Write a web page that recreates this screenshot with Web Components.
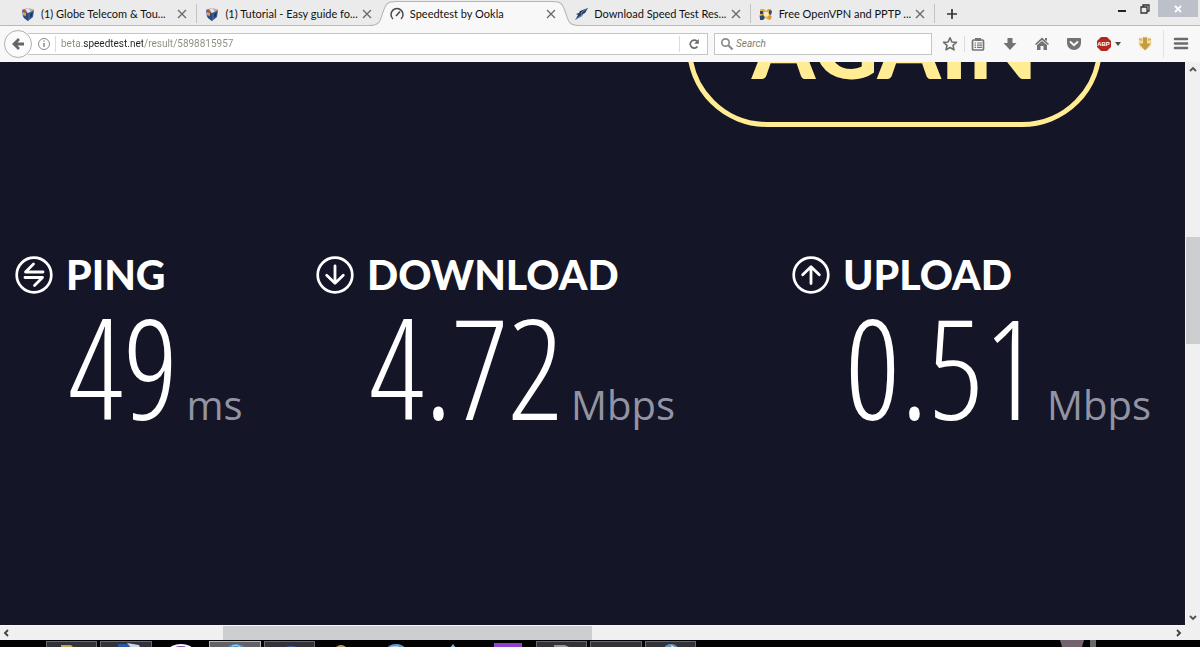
<!DOCTYPE html>
<html lang="en">
<head>
<meta charset="utf-8">
<meta name="viewport" content="width=device-width, initial-scale=1">
<title>Speedtest by Ookla</title>
<style>
  html, body { height: 100%; margin: 0; }
  body { overflow: hidden; background: #000; font-family: Roboto, "Noto Sans", sans-serif; }
</style>
</head>
<body>
<browser-window>
  <tab-strip slot="tabs">
    <browser-tab icon="cube">(1) Globe Telecom &amp; Tou...</browser-tab>
    <browser-tab icon="cube">(1) Tutorial - Easy guide fo...</browser-tab>
    <browser-tab icon="gauge" active>Speedtest by Ookla</browser-tab>
    <browser-tab icon="bolt">Download Speed Test Res...</browser-tab>
    <browser-tab icon="knot">Free OpenVPN and PPTP ...</browser-tab>
  </tab-strip>
  <nav-bar slot="nav" url="beta.speedtest.net/result/5898815957"></nav-bar>
  <speed-page>
    <speed-result label="PING" value="49" unit="ms" icon="ping"></speed-result>
    <speed-result label="DOWNLOAD" value="4.72" unit="Mbps" icon="circledown"></speed-result>
    <speed-result label="UPLOAD" value="0.51" unit="Mbps" icon="circleup"></speed-result>
  </speed-page>
  <task-bar slot="taskbar"></task-bar>
</browser-window>

<script>
// icon name -> [viewBox size, markup]
const ICONS = {
  cube: [14, `<path d="M1 3 7 1l6 2-1 7-5 4-5-4z" fill="#3a5d93"/><path d="M1 3 7 1l6 2-6 3z" fill="#dfe3ea"/><path d="M1 3l3-1 2 3-1 1z" fill="#c5492e"/><path d="M8 2l3 0 2 1-3 1z" fill="#e19a3c"/><path d="M2 5l3 1 0 3-3-1z" fill="#e6a23c"/><path d="M7 6v8l-4-3 0-2 2 1V6z" fill="#294a80"/><path d="M9 7l3-2-1 4-2 2z" fill="#1e3866"/>`],
  gauge: [14, `<path d="M3 12A6 6 0 1 1 11 12" fill="none" stroke="#4a4a4c" stroke-width="1.5"/><path d="M6 9 10 4.5" stroke="#4a4a4c" stroke-width="1.6"/>`],
  bolt: [14, `<path d="M14 1 6 4 5 6 2 7 4 8 1 13 8 9 9 7 11 6z" fill="#26385f"/><path d="M12 2 7 6 8 8 2 12" fill="none" stroke="#5f8ecb" stroke-width="1"/>`],
  knot: [14, `<path d="M1 2l4 0 2 2 2-2 3 0 1 3-2 2 2 3-2 3-3-1-2-2-2 2-3 0-1-3 2-3z" fill="#e1ad43"/><path d="M1 4l3 0 0 3-3 0zM10 3l3 1-1 4-2-1zM1 9l3-1 2 3-2 2-3 0z" fill="#2c477d"/><path d="M5 5l4 0 1 3-2 2-3-1z" fill="#f7e9bb"/><path d="M9 9l3 0 0 3-2 1z" fill="#d99d2c"/>`],
  close: [10, `<path d="M1 1 9 9M9 1 1 9" stroke="#68686a" stroke-width="1.3"/>`],
  plus: [12, `<path d="M6 1v10M1 6h10" stroke="#333" stroke-width="1.7"/>`],
  back: [14, `<path d="M8 2 3 7 8 12M3 7H13" fill="none" stroke="#666" stroke-width="2.8"/>`],
  info: [14, `<circle cx="7" cy="7" r="5.5" fill="none" stroke="#8b8b8b"/><path d="M7 6v4M7 3.5v1.3" stroke="#777" stroke-width="1.3"/>`],
  reload: [12, `<path d="M9.5 8.5A4 4 0 1 1 9 3.2" fill="none" stroke="#6b6b6b" stroke-width="1.7"/><path d="M10.8 1v4.8H6.2z" fill="#6b6b6b"/>`],
  search: [14, `<circle cx="5.5" cy="5.5" r="3.7" fill="none" stroke="#8a8a8a" stroke-width="1.7"/><path d="M8.5 8.5 12.5 12.5" stroke="#8a8a8a" stroke-width="2.2"/>`],
  star: [16, `<path d="M8 1.8 9.9 6 14.4 6.4 11 9.4 12 13.9 8 11.5 4 13.9 5 9.4 1.6 6.4 6.1 6z" fill="none" stroke="#6d6d6d" stroke-width="1.6" stroke-linejoin="round"/>`],
  list: [14, `<rect x="1.5" y="3" width="11" height="10" rx="1" fill="none" stroke="#747474" stroke-width="1.7"/><path d="M4 1h6v3H4z" fill="#747474"/><path d="M3.5 6h1.5M6 6h5M3.5 8.2h1.500M6 8.2h5M3.5 10.4h1.500M6 10.4h5" stroke="#747474" stroke-width="1.2"/>`],
  down: [16, `<path d="M5.5 2h5v5h4L8 14 1.5 7h4z" fill="#737373"/>`],
  home: [16, `<path d="M8 1.5 15 8l-1 1-6-5-6 5-1-1z" fill="#737373"/><path d="M3 9l5-4 5 4v5H9.5v-4h-3v4H3z" fill="#737373"/><path d="M11 2h2v3l-2-1z" fill="#737373"/>`],
  pocket: [16, `<path d="M2 2h12q1 0 1 1v4a7 7 0 0 1-14 0V3q0-1 1-1z" fill="#737373"/><path d="M4.5 6 8 9.3 11.5 6" fill="none" stroke="#fafafa" stroke-width="1.9" stroke-linecap="round"/>`],
  stop: [16, `<path d="M5 1h6l4 4v6l-4 4H5l-4-4V5z" fill="#b52820"/>`],
  caret: [8, `<path d="M1 2h6L4 6z" fill="#4b4b4b"/>`],
  golden: [16, `<circle cx="8" cy="7" r="6.5" fill="#f0dfa9"/><path d="M2 3l3 1M14 3l-3 1" stroke="#d8b85d" stroke-width="2"/><path d="M6 1.5h4v6h4L8 14.5 2 7.5h4z" fill="#c59c3d"/>`],
  menu: [16, `<path d="M2 3h12M2 7.5h12M2 12h12" stroke="#6b6b6b" stroke-width="2.6" stroke-linecap="round"/>`],
  minimize: [10, `<path d="M1 7h8" stroke="#222" stroke-width="2"/>`],
  restore: [10, `<path d="M1 3h6v6H1zM3 3V1h6v6H7" fill="none" stroke="#333" stroke-width="1.3"/>`],
  quit: [10, `<path d="M2 2 8 8M8 2 2 8" stroke="#fff" stroke-width="1.8"/>`],
  up: [8, `<path d="M1 6 4 3 7 6" fill="none" stroke="#555" stroke-width="1.9"/>`],
  dn: [8, `<path d="M1 2 4 5 7 2" fill="none" stroke="#555" stroke-width="1.9"/>`],
  left: [8, `<path d="M5 1 2 4 5 7" fill="none" stroke="#444" stroke-width="1.9"/>`],
  right: [8, `<path d="M3 1 6 4 3 7" fill="none" stroke="#444" stroke-width="1.9"/>`],
  ping: [38, `<circle cx="19" cy="19" r="17.3" fill="none" stroke="#fff" stroke-width="2.7"/><path d="M28 16H10.5L18.5 8M10 21.5H27.5L19.5 29.5" fill="none" stroke="#fff" stroke-width="2.8" stroke-linecap="round" stroke-linejoin="round"/>`],
  circledown: [38, `<circle cx="19" cy="19" r="17.3" fill="none" stroke="#fff" stroke-width="2.7"/><path d="M19 10V27M10.7 19.3 19 27.3 27.3 19.3" fill="none" stroke="#fff" stroke-width="2.8" stroke-linecap="round" stroke-linejoin="round"/>`],
  circleup: [38, `<circle cx="19" cy="19" r="17.3" fill="none" stroke="#fff" stroke-width="2.7"/><path d="M19 27.5V11M10.7 18.7 19 10.7 27.3 18.7" fill="none" stroke="#fff" stroke-width="2.8" stroke-linecap="round" stroke-linejoin="round"/>`]
};

function icon(name) {
  const [box, body] = ICONS[name];
  return `<svg width="${box}" height="${box}" viewBox="0 0 ${box} ${box}" aria-hidden="true">${body}</svg>`;
}

const RESET = `
  * { box-sizing: border-box; }
  svg { display: block; flex: none; }
  button { margin: 0; padding: 0; border: 0; background: none; font: inherit; color: inherit; cursor: pointer; }
`;

/*
whole window: tabs, navigation, scrolled page, taskbar
 - slots: tabs, nav, default - page, taskbar
*/
class BrowserWindow extends HTMLElement {
  constructor() {
    super();
    this.attachShadow({ mode: 'open' });
    this.shadowRoot.innerHTML = `
      <style>
        ${RESET}
        :host { display: flex; flex-direction: column; height: 100vh; }
        .view {
          flex: 1;
          min-height: 0;
          display: grid;
          grid-template-columns: 1fr 15px;
          grid-template-rows: 1fr 15px;
          background: #f0f0f0;
        }
        .page { min-width: 0; min-height: 0; overflow: hidden; display: grid; }
        .bar { display: flex; align-items: center; }
        .v { flex-direction: column; border-left: 1px solid #f8f8f8; }
        .h { border-top: 1px solid #f8f8f8; }
        .track { flex: 1; align-self: stretch; display: flex; }
        .v .track { flex-direction: column; }
        .thumb { background: #cdcecf; }
        .v .before { flex: 160; }
        .v .thumb { flex: 107; }
        .v .after { flex: 266; }
        .h .before { flex: 208; }
        .h .thumb { flex: 368; }
        .h .after { flex: 578; }
        .bar button { width: 14px; height: 14px; display: grid; place-items: center; }
      </style>
      <slot name="tabs"></slot>
      <slot name="nav"></slot>
      <div class="view">
        <div class="page"><slot></slot></div>
        <div class="bar v">
          <button aria-label="Scroll up">${icon('up')}</button>
          <div class="track"><div class="before"></div><div class="thumb"></div><div class="after"></div></div>
          <button aria-label="Scroll down">${icon('dn')}</button>
        </div>
        <div class="bar h">
          <button aria-label="Scroll left">${icon('left')}</button>
          <div class="track"><div class="before"></div><div class="thumb"></div><div class="after"></div></div>
          <button aria-label="Scroll right">${icon('right')}</button>
        </div>
      </div>
      <slot name="taskbar"></slot>
    `;
  }
}

/*
title bar with tabs and window controls
 - slots: default - browser-tab elements
*/
class TabStrip extends HTMLElement {
  constructor() {
    super();
    this.attachShadow({ mode: 'open' });
    this.shadowRoot.innerHTML = `
      <style>
        ${RESET}
        :host {
          display: flex;
          flex: none;
          height: 26px;
          padding-left: 13px;
          background: #ebebec;
          box-shadow: inset 0 -1px #b9b9bb;
        }
        .tabs { display: flex; flex: 0 1 922px; min-width: 0; }
        .add { width: 33px; display: grid; place-items: center; padding-top: 2px; }
        .controls { display: flex; margin-left: auto; align-items: flex-start; }
        .controls button { height: 17px; width: 23px; display: grid; place-items: center; }
        .controls .quit { width: 40px; background: #bcc0c8; margin-left: 2px; margin-right: 2px; }
      </style>
      <div class="tabs" role="tablist"><slot></slot></div>
      <button class="add" aria-label="New tab">${icon('plus')}</button>
      <div class="controls">
        <button aria-label="Minimize">${icon('minimize')}</button>
        <button aria-label="Restore">${icon('restore')}</button>
        <button class="quit" aria-label="Close window">${icon('quit')}</button>
      </div>
    `;
  }
}

/*
one tab
 - attributes: icon, active
 - slots: default - title
*/
class BrowserTab extends HTMLElement {
  constructor() {
    super();
    this.attachShadow({ mode: 'open' });
  }

  connectedCallback() {
    const active = this.hasAttribute('active');
    this.shadowRoot.innerHTML = `
      <style>
        ${RESET}
        :host { display: block; flex: 1; min-width: 0; font: 11px/16px Lato, "Open Sans", sans-serif; color: #111; }
        .tab {
          position: relative;
          height: 26px;
          display: flex;
          align-items: center;
          padding: 2px 9px 0 8px;
        }
        .title { display: flex; align-items: center; flex: 1; min-width: 0; gap: 6px; }
        .text { white-space: nowrap; overflow: hidden; }
        .close { padding: 1px; }
        .line { position: absolute; right: 0; top: 4px; width: 1px; height: 19px; background: #c2c2c5; }
        .shape { position: absolute; left: -13px; top: 0; width: calc(100% + 26px); height: 26px; }
        .title, .close { position: relative; }
      </style>
      <div class="tab">
        ${active
          ? `<svg class="shape" viewBox="0 0 210 26" preserveAspectRatio="none" aria-hidden="true">
               <path d="M0 26V25.5C11 25.5 11 21 14 12 17 3 19 1.5 27 1.5H183C191 1.5 193 3 196 12 199 21 199 25.5 210 25.5V26z" fill="#f8f8f8"/>
               <path d="M0 25.5C11 25.5 11 21 14 12 17 3 19 1.5 27 1.5H183C191 1.5 193 3 196 12 199 21 199 25.5 210 25.5" fill="none" stroke="#b4b4b6"/>
             </svg>`
          : this.nextElementSibling && this.nextElementSibling.hasAttribute('active') ? '' : '<div class="line"></div>'}
        <button class="title" role="tab" aria-selected="${active}">
          ${icon(this.getAttribute('icon'))}<span class="text"><slot></slot></span>
        </button>
        <button class="close" aria-label="Close tab">${icon('close')}</button>
      </div>
    `;
  }
}

/*
address bar, search box and toolbar buttons
 - attributes: url
*/
class NavBar extends HTMLElement {
  constructor() {
    super();
    this.attachShadow({ mode: 'open' });
  }

  connectedCallback() {
    this.shadowRoot.innerHTML = `
      <style>
        ${RESET}
        :host {
          display: flex;
          flex: none;
          align-items: center;
          height: 36px;
          padding: 0 5px 0 4px;
          background: #f8f8f8;
          font-size: 10px;
        }
        .back {
          position: relative;
          width: 28px;
          height: 28px;
          border: 1px solid #b0b0b0;
          border-radius: 50%;
          background: #fbfbfb;
          display: grid;
          place-items: center;
          flex: none;
        }
        .field {
          display: flex;
          align-items: center;
          height: 22px;
          border: 1px solid #c6c6c8;
          background: #fff;
          min-width: 0;
        }
        .address { flex: 683; margin-left: -4px; padding-left: 9px; border-left: 0; }
        .search { flex: 215; margin: 0 4px 0 6px; padding-left: 5px; gap: 2px; }
        input { border: 0; outline: 0; background: none; padding: 0; flex: 1; min-width: 0; font: inherit; line-height: 16px; color: #333; }
        /* host part of the address is darker than the rest */
        .url {
          padding-left: 5px;
          margin-left: 4px;
          border-left: 1px solid #dcdcdc;
          color: #8b8b80;
          background: linear-gradient(to right, #8b8b80 27px, #222 27px, #222 87px, #8b8b80 87px);
          -webkit-background-clip: text;
          background-clip: text;
          -webkit-text-fill-color: transparent;
        }
        .search input { font-style: italic; }
        .search input::placeholder { color: #7d7d74; opacity: 1; }
        .reload { width: 28px; height: 16px; display: grid; place-items: center; border-left: 1px solid #dcdcdc; }
        .tools { display: flex; align-items: center; }
        .tools button { width: 32px; height: 24px; display: flex; justify-content: center; align-items: center; gap: 2px; }
        .tools .star { width: 28px; }
        .tools .list { width: 30px; padding-right: 3px; border-left: 1px solid #dcdcdc; height: 16px; }
        .tools .adblock { width: 37px; }
        .tools .golden { width: 36px; }
        .tools .menu { border-left: 1px solid #e2e2e2; height: 28px; padding-left: 3px; }
        .abp { display: grid; place-items: center; }
        .abp > * { grid-area: 1 / 1; }
        .abp span { font: bold 6px "Liberation Sans", sans-serif; color: #fff; }
      </style>
      <button class="back" aria-label="Back">${icon('back')}</button>
      <div class="field address">
        <label for="url" aria-label="Address">${icon('info')}</label>
        <input class="url" id="url" type="text" value="${this.getAttribute('url')}" spellcheck="false">
        <button class="reload" aria-label="Reload">${icon('reload')}</button>
      </div>
      <div class="field search">
        <label for="search" aria-label="Search">${icon('search')}</label>
        <input id="search" type="text" placeholder="Search">
      </div>
      <div class="tools">
        <button class="star" aria-label="Bookmark">${icon('star')}</button>
        <button class="list" aria-label="Bookmarks list">${icon('list')}</button>
        <button aria-label="Downloads">${icon('down')}</button>
        <button aria-label="Home">${icon('home')}</button>
        <button aria-label="Pocket">${icon('pocket')}</button>
        <button class="adblock"><span class="abp">${icon('stop')}<span>ABP</span></span>${icon('caret')}</button>
        <button class="golden" aria-label="Download helper">${icon('golden')}</button>
        <button class="menu" aria-label="Menu">${icon('menu')}</button>
      </div>
    `;
  }
}

/*
dark result page with the lower part of the restart button in view
 - slots: default - speed-result elements
*/
class SpeedPage extends HTMLElement {
  constructor() {
    super();
    this.attachShadow({ mode: 'open' });
    this.shadowRoot.innerHTML = `
      <style>
        ${RESET}
        :host { display: block; background: #141526; overflow: hidden; }
        .again {
          display: block;
          width: 35%;
          height: 160px;
          margin-top: -95px;
          margin-left: 58%;
          padding-bottom: 6px;
          border: 5px solid #ffec93;
          border-radius: 80px;
          color: #ffec93;
          font: 900 90px/90px Lato, "Liberation Sans", sans-serif;
          text-align: center;
        }
        .results {
          display: grid;
          grid-template-columns: 301fr 476fr 393fr;
          padding: 126px 0 0 15px;
        }
      </style>
      <button class="again">AGAIN</button>
      <div class="results"><slot></slot></div>
    `;
  }
}

/*
one measurement
 - attributes: label, value, unit, icon
*/
class SpeedResult extends HTMLElement {
  constructor() {
    super();
    this.attachShadow({ mode: 'open' });
  }

  connectedCallback() {
    this.shadowRoot.innerHTML = `
      <style>
        ${RESET}
        :host { display: block; min-width: 0; white-space: nowrap; }
        .head {
          display: flex;
          align-items: center;
          gap: 13px;
          color: #fff;
          font: 900 41px/44px Lato, "Liberation Sans", sans-serif;
        }
        .body { display: flex; align-items: baseline; gap: 8px; padding-left: 53px; }
        .value { color: #fff; font: 300 138px/138px "Open Sans Condensed Light", "Open Sans Condensed", "Liberation Sans Narrow", sans-serif; }
        .unit { color: #9294a4; font: 400 40px/44px "Open Sans", sans-serif; }
      </style>
      <div class="head">${icon(this.getAttribute('icon'))}<span>${this.getAttribute('label')}</span></div>
      <div class="body">
        <span class="value">${this.getAttribute('value')}</span>
        <span class="unit">${this.getAttribute('unit')}</span>
      </div>
    `;
  }
}

// top edge of the desktop taskbar
class TaskBar extends HTMLElement {
  constructor() {
    super();
    this.attachShadow({ mode: 'open' });
    // [button state, picture], twelve places from left to right
    const items = [
      ['open', '<path d="M14 4h10l2 2h4v3H14z" fill="#c79f55"/>'],
      ['open', '<path d="M17 3l11 0 3 5H17z" fill="#2d55a5"/><path d="M26 2l12 2 2 4h-9z" fill="#cdd4e2"/>'],
      ['', '<ellipse cx="25" cy="9" rx="12" ry="6" fill="#fff"/><ellipse cx="25" cy="9" rx="9" ry="4" fill="#8342a8"/>'],
      ['front', '<ellipse cx="26" cy="9" rx="9" ry="6" fill="#5595c9"/><path d="M22 5l5-1 3 2" stroke="#b4d3e6" fill="none"/>'],
      ['open', '<ellipse cx="26" cy="9" rx="8" ry="4" fill="#3559ad"/>'],
      ['', '<ellipse cx="22" cy="7" rx="5" ry="3" fill="#b59661"/>'],
      ['', '<ellipse cx="22" cy="8" rx="9" ry="5" fill="#5d93c8"/><path d="M17 6l8-1" stroke="#b7cee2"/>'],
      ['', '<path d="M21 8l4-5 4 5z" fill="#70afdf"/>'],
      ['', '<path d="M12 2h28v6H12z" fill="#9140d0"/>'],
      ['open', '<path d="M17 4h11l4 2v2H17z" fill="#96979c"/>'],
      ['open', ''],
      ['open', '<ellipse cx="25" cy="8" rx="7" ry="5" fill="#6b92b5"/><path d="M25 4l5 3-4 1z" fill="#e7ecef"/>']
    ];
    this.shadowRoot.innerHTML = `
      <style>
        ${RESET}
        :host { display: flex; flex: none; height: 7px; padding-left: 46px; background: #020203; overflow: hidden; }
        .apps { display: grid; grid-template-columns: repeat(12, 1fr); gap: 3px; flex: 0 1 650px; min-width: 0; }
        .apps button { display: flex; align-items: flex-start; height: 12px; margin-top: 1px; border: 1px solid transparent; border-bottom: 0; overflow: hidden; }
        .apps .open { background: #32323b; border-color: #66666c; }
        .apps .front { background: #626266; border-color: #b4b4b8; }
        .tray { margin-left: auto; padding-right: 104px; }
      </style>
      <div class="apps">
        ${items.map(([state, body], i) => `<button class="${state}" aria-label="App ${i + 1}"><svg width="50" height="8" viewBox="0 1 50 8" aria-hidden="true">${body}</svg></button>`).join('')}
      </div>
      <div class="tray"><svg width="36" height="7" viewBox="0 0 36 7" aria-hidden="true"><path d="M0 0h24l-2 7H2z" fill="#73626d"/><path d="M30 0h6v7h-6z" fill="#68686c"/></svg></div>
    `;
  }
}

customElements.define('browser-window', BrowserWindow);
customElements.define('tab-strip', TabStrip);
customElements.define('browser-tab', BrowserTab);
customElements.define('nav-bar', NavBar);
customElements.define('speed-page', SpeedPage);
customElements.define('speed-result', SpeedResult);
customElements.define('task-bar', TaskBar);
</script>
</body>
</html>
